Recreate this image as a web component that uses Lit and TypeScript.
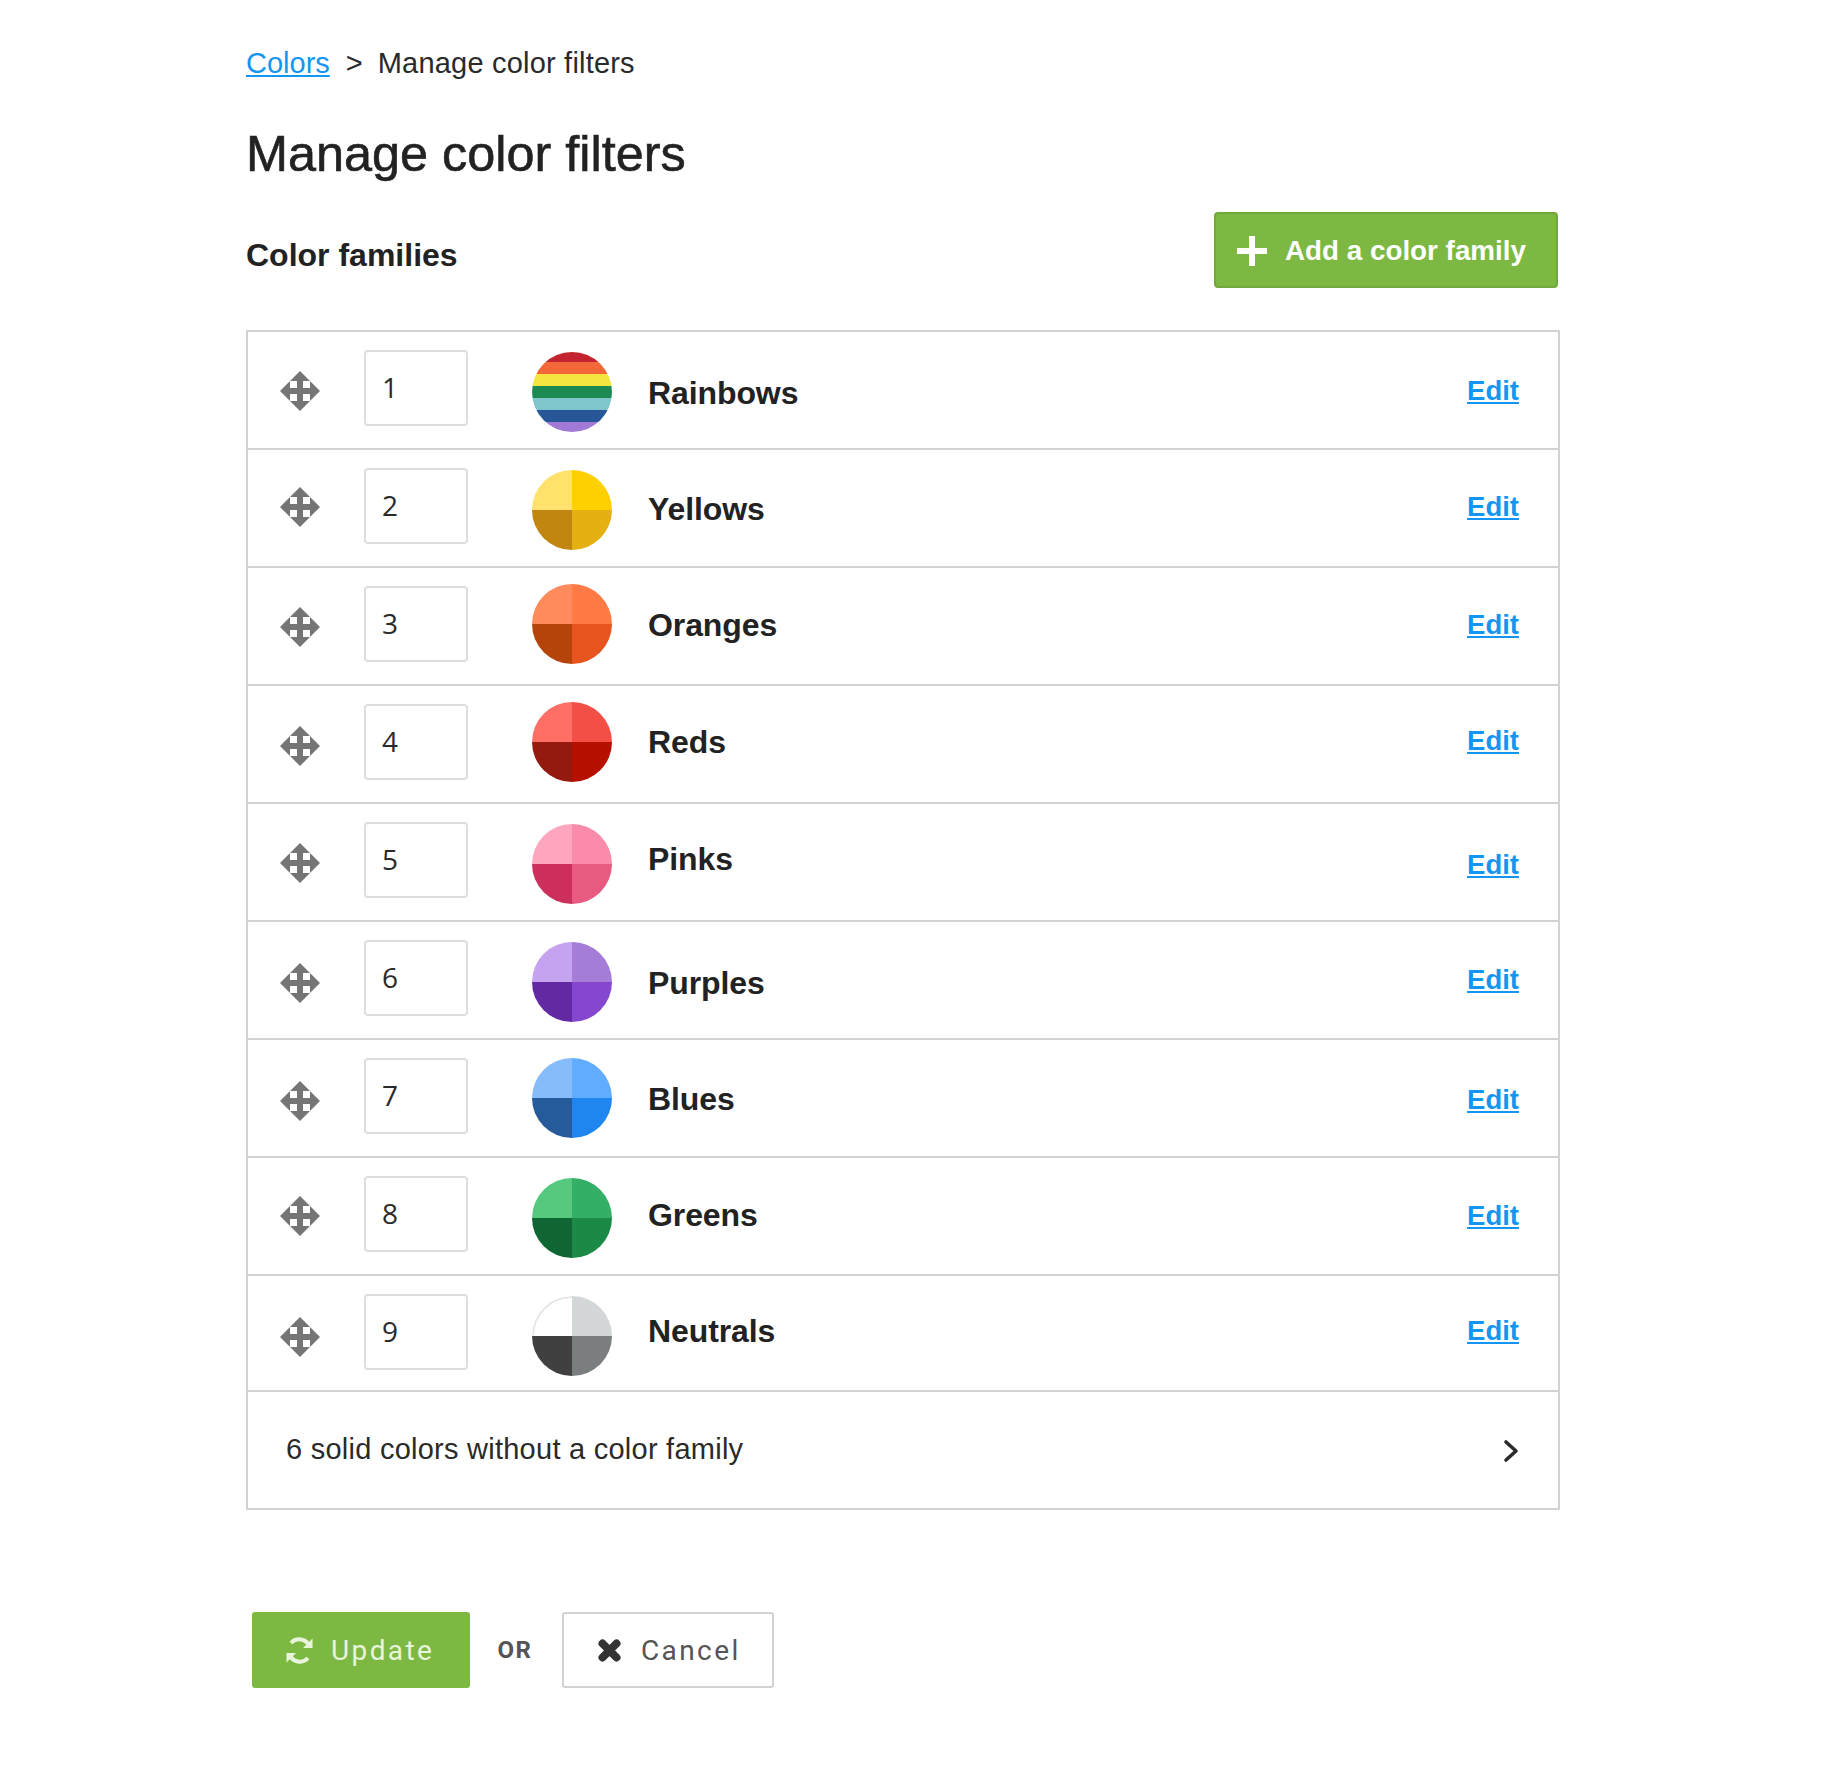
import { LitElement, html, css, svg } from "lit";
import { customElement } from "lit/decorators.js";

type Family = {
  name: string;
  // quadrants: top left, top right, bottom left, bottom right
  colors: string[];
  height: number;
  drag: number;
  swatch: number;
  label: number;
  edit: number;
};

const families: Family[] = [
  { name: "Rainbows", colors: [], height: 118, drag: 39, swatch: 20, label: 41, edit: 41 },
  { name: "Yellows", colors: ["#ffe16b", "#ffd000", "#c1860f", "#e5b012"], height: 118, drag: 37, swatch: 20, label: 39, edit: 39 },
  { name: "Oranges", colors: ["#ff8a5c", "#ff7a45", "#b5440a", "#e8541e"], height: 118, drag: 39, swatch: 16, label: 37, edit: 39 },
  { name: "Reds", colors: ["#ff6f66", "#f25046", "#941a0f", "#b51000"], height: 118, drag: 40, swatch: 16, label: 36, edit: 37 },
  { name: "Pinks", colors: ["#ffa6bf", "#fb8bab", "#cc2f5b", "#e85a80"], height: 118, drag: 39, swatch: 20, label: 35, edit: 43 },
  { name: "Purples", colors: ["#c6a3f0", "#a57cd6", "#6229a3", "#8547cf"], height: 118, drag: 41, swatch: 20, label: 41, edit: 40 },
  { name: "Blues", colors: ["#85bcf9", "#61acff", "#265a9b", "#1e86ee"], height: 118, drag: 41, swatch: 18, label: 39, edit: 42 },
  { name: "Greens", colors: ["#56c97f", "#33b066", "#0f6632", "#1a8a46"], height: 118, drag: 38, swatch: 20, label: 37, edit: 40 },
  { name: "Neutrals", colors: ["#ffffff", "#d3d7d7", "#404040", "#7a7e7e"], height: 116, drag: 41, swatch: 20, label: 35, edit: 37 },
];

const stripes = [
  ["#c4242f", 0, 10],
  ["#f26838", 10, 12],
  ["#f5e63f", 22, 12],
  ["#1b8a52", 34, 12],
  ["#7fc6cc", 46, 12],
  ["#265695", 58, 12],
  ["#a27ad6", 70, 10],
] as const;

@customElement("app-root")
export class AppRoot extends LitElement {
  static styles = css`
    :host {
      display: block;
      height: 1778px;
      box-sizing: border-box;
      padding: 45px 278px 0 246px;
      background: #fff;
      color: #222;
      font-family: "Liberation Sans", Arial, sans-serif;
    }

    a {
      color: #1296f2;
    }

    .crumbs {
      display: flex;
      font-size: 29px;
      line-height: 36px;
      color: #2a2a2a;
    }

    .crumbs .sep {
      margin: 0 15px 0 16px;
    }

    .crumbs .here {
      letter-spacing: 0.2px;
    }

    h1 {
      margin: 43px 0 0;
      font-size: 50.4px;
      line-height: 60px;
      font-weight: 400;
      -webkit-text-stroke: 0.6px #222;
    }

    .head {
      display: flex;
      justify-content: space-between;
      align-items: flex-start;
      margin-top: 28px;
      padding-right: 2px;
      height: 118px;
    }

    h2 {
      margin: 23px 0 0;
      font-size: 32px;
      line-height: 40px;
      font-weight: 700;
    }

    .add {
      display: flex;
      align-items: center;
      gap: 17px;
      box-sizing: border-box;
      width: 344px;
      height: 76px;
      padding: 1px 0 0 20px;
      border: 2px solid #72a83f;
      border-radius: 4px;
      background: #7db942;
      color: #fff;
      font-size: 27.8px;
      font-weight: 700;
    }

    .table {
      border: 2px solid #d2d2d2;
    }

    .row {
      display: grid;
      grid-template-columns: 116px 168px 116px 1fr auto;
      align-items: start;
      box-sizing: border-box;
      border-bottom: 2px solid #d2d2d2;
      padding-right: 39px;
    }

    .drag {
      display: block;
      margin-left: 32px;
      width: 40px;
      height: 40px;
    }

    .order {
      box-sizing: border-box;
      width: 104px;
      height: 76px;
      margin-top: 18px;
      padding: 17px 0 0 16px;
      border: 2px solid #dedede;
      border-radius: 4px;
      font-size: 28px;
      line-height: 36px;
      font-family: "Open Sans", sans-serif;
      color: #2a2a2a;
    }

    .swatch {
      display: block;
      width: 80px;
      height: 80px;
      border-radius: 50%;
    }

    .name {
      font-size: 32px;
      line-height: 40px;
      font-weight: 700;
      letter-spacing: -0.1px;
    }

    .edit {
      font-size: 27.5px;
      line-height: 36px;
      font-weight: 700;
    }

    .rest {
      display: flex;
      justify-content: space-between;
      align-items: center;
      height: 116px;
      padding: 0 39px 2px 38px;
      box-sizing: border-box;
      font-size: 29px;
      letter-spacing: 0.25px;
      color: #2a2a2a;
    }

    .rest svg {
      margin-top: 4px;
    }

    .actions {
      display: flex;
      align-items: center;
      margin: 102px 0 0 6px;
    }

    .btn {
      display: flex;
      align-items: center;
      box-sizing: border-box;
      height: 76px;
      border-radius: 3px;
      font-family: Roboto, sans-serif;
      font-size: 28px;
      letter-spacing: 2.4px;
    }

    .update {
      width: 218px;
      gap: 17px;
      padding-left: 33px;
      background: #7db942;
      color: #e9f4dd;
    }

    .or {
      width: 92px;
      text-align: center;
      font-family: Roboto, sans-serif;
      font-size: 24px;
      font-weight: 700;
      letter-spacing: 1.5px;
      color: #555;
      padding-right: 2px;
      box-sizing: border-box;
    }

    .cancel {
      width: 212px;
      gap: 20px;
      padding-left: 34px;
      border: 2px solid #d2d2d2;
      color: #555;
    }
  `;

  renderDrag() {
    return html`<svg class="drag" viewBox="0 0 40 40" aria-hidden="true">
      <path
        fill="#757575"
        fill-rule="evenodd"
        d="M20 0 40 20 20 40 0 20ZM10 10V17H17V10ZM23 10V17H30V10ZM10 23V30H17V23ZM23 23V30H30V23Z"
      />
    </svg>`;
  }

  renderSwatch(f: Family) {
    const [tl, tr, bl, br] = f.colors;
    return html`<svg class="swatch" style="margin-top:${f.swatch}px" viewBox="0 0 80 80" aria-hidden="true">
      ${f.colors.length
        ? svg`
            <rect width="40" height="40" fill=${tl} />
            <rect x="40" width="40" height="40" fill=${tr} />
            <rect y="40" width="40" height="40" fill=${bl} />
            <rect x="40" y="40" width="40" height="40" fill=${br} />
          `
        : stripes.map(([c, y, h]) => svg`<rect y=${y} width="80" height=${h} fill=${c} />`)}
      ${f.name === "Neutrals"
        ? svg`<path d="M1 40A39 39 0 0 1 40 1" fill="none" stroke="#e4e6e6" stroke-width="2" />`
        : ""}
    </svg>`;
  }

  renderRow(f: Family, i: number) {
    return html`
      <div class="row" style="height:${f.height}px">
        <div style="margin-top:${f.drag}px">${this.renderDrag()}</div>
        <div class="order">${i + 1}</div>
        <div>${this.renderSwatch(f)}</div>
        <div class="name" style="margin-top:${f.label}px">${f.name}</div>
        <a class="edit" href="#" style="margin-top:${f.edit}px">Edit</a>
      </div>
    `;
  }

  render() {
    return html`
      <div class="crumbs"><a href="#">Colors</a><span class="sep">&gt;</span><span class="here">Manage color filters</span></div>
      <h1>Manage color filters</h1>
      <div class="head">
        <h2>Color families</h2>
        <div class="add">
          <svg width="32" height="32" viewBox="0 0 32 32" aria-hidden="true">
            <path d="M16 1V31M1 16H31" stroke="#fff" stroke-width="6" />
          </svg>
          Add a color family
        </div>
      </div>
      <div class="table">
        ${families.map((f, i) => this.renderRow(f, i))}
        <div class="rest">
          <span>6 solid colors without a color family</span>
          <svg width="16" height="24" viewBox="0 0 16 24" aria-hidden="true">
            <path d="M3 3 13 12 3 21" fill="none" stroke="#2a2a2a" stroke-width="3.6" stroke-linecap="round" stroke-linejoin="round" />
          </svg>
        </div>
      </div>
      <div class="actions">
        <div class="btn update">
          <svg width="29" height="29" viewBox="0 0 29 29" aria-hidden="true">
            <path
              d="M24.5 10.5A11 11 0 0 0 6 7M4.5 18.5A11 11 0 0 0 23 22"
              fill="none"
              stroke="#e9f4dd"
              stroke-width="4"
            />
            <path d="M27.5 2.5V12H18ZM1.5 26.5V17H11Z" fill="#e9f4dd" />
          </svg>
          Update
        </div>
        <div class="or">OR</div>
        <div class="btn cancel">
          <svg width="23" height="23" viewBox="0 0 23 23" aria-hidden="true">
            <path d="M4.5 4.5 18.5 18.5M18.5 4.5 4.5 18.5" stroke="#333" stroke-width="8" stroke-linecap="round" />
          </svg>
          Cancel
        </div>
      </div>
    `;
  }
}
